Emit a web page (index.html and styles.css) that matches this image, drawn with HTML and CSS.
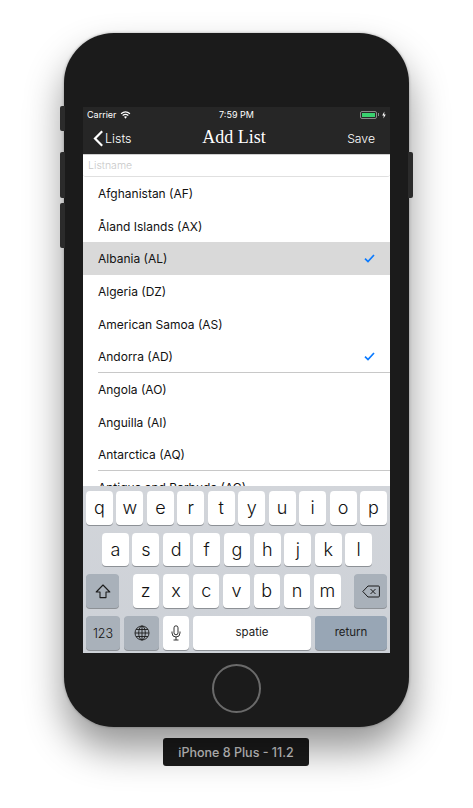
FILE: index.html
```html
<!DOCTYPE html>
<html lang="en">
<head>
<meta charset="utf-8">
<title>Add List</title>
<link rel="stylesheet" href="styles.css">
</head>
<body>
<div class="stage">
  <div class="phone">
    <span class="side side-mute"></span>
    <span class="side side-up"></span>
    <span class="side side-down"></span>
    <span class="side side-power"></span>
    <div class="screen">
      <div class="status">
        <div class="status-left">
          <span>Carrier</span>
          <svg class="wifi" viewBox="0 0 12 9" width="11" height="8"><path d="M1 3.2C4 .6 8 .6 11 3.2" fill="none" stroke="#fff" stroke-width="1.4"/><path d="M2.8 5C4.8 3.4 7.2 3.4 9.2 5" fill="none" stroke="#fff" stroke-width="1.4"/><path d="M4.3 6.6 6 8.6l1.7-2C6.6 5.8 5.4 5.8 4.3 6.6z" fill="#fff"/></svg>
        </div>
        <div class="status-time">7:59 PM</div>
        <div class="status-right">
          <span class="battery"><span class="battery-fill"></span></span>
          <span class="battery-tip"></span>
          <svg class="bolt" viewBox="0 0 5 9" width="4" height="8"><path d="M3 0 .3 5h1.9L1.8 9 4.7 3.8H2.7z" fill="#fff"/></svg>
        </div>
      </div>
      <div class="nav">
        <div class="nav-back">
          <svg class="chevron" viewBox="0 0 11 17" width="11" height="17"><path d="M9.2 1.3 2 8.5l7.2 7.2" fill="none" stroke="#fff" stroke-width="2.2"/></svg>
          <span>Lists</span>
        </div>
        <div class="nav-title">Add List</div>
        <div class="nav-save">Save</div>
      </div>
      <div class="content">
        <div class="field">Listname</div>
        <div class="row"><span>Afghanistan (AF)</span></div>
        <div class="row"><span>Åland Islands (AX)</span></div>
        <div class="row row-active"><span>Albania (AL)</span><svg class="check" viewBox="0 0 11 9" width="11" height="9"><path d="M1 4.6 4 7.6 10 1" fill="none" stroke="#0a7aff" stroke-width="1.7"/></svg></div>
        <div class="row"><span>Algeria (DZ)</span></div>
        <div class="row"><span>American Samoa (AS)</span></div>
        <div class="row row-line"><span>Andorra (AD)</span><svg class="check" viewBox="0 0 11 9" width="11" height="9"><path d="M1 4.6 4 7.6 10 1" fill="none" stroke="#0a7aff" stroke-width="1.7"/></svg></div>
        <div class="row"><span>Angola (AO)</span></div>
        <div class="row"><span>Anguilla (AI)</span></div>
        <div class="row row-line"><span>Antarctica (AQ)</span></div>
        <div class="row"><span>Antigua and Barbuda (AG)</span></div>
      </div>
      <div class="keyboard">
        <div class="kb-row">
          <div class="key">q</div><div class="key">w</div><div class="key">e</div><div class="key">r</div><div class="key">t</div><div class="key">y</div><div class="key">u</div><div class="key">i</div><div class="key">o</div><div class="key">p</div>
        </div>
        <div class="kb-row kb-row-mid">
          <div class="key">a</div><div class="key">s</div><div class="key">d</div><div class="key">f</div><div class="key">g</div><div class="key">h</div><div class="key">j</div><div class="key">k</div><div class="key">l</div>
        </div>
        <div class="kb-row kb-row-third">
          <div class="key key-dark key-action">
            <svg viewBox="0 0 16 15" width="16" height="15"><path d="M8 1 1.200 8H5v5.600h6V8h3.800z" fill="none" stroke="#1c1c1c" stroke-width="1.100" stroke-linejoin="round"/></svg>
          </div>
          <div class="letters">
            <div class="key">z</div><div class="key">x</div><div class="key">c</div><div class="key">v</div><div class="key">b</div><div class="key">n</div><div class="key">m</div>
          </div>
          <div class="key key-dark key-action">
            <svg viewBox="0 0 18 13" width="18" height="13"><path d="M6 1h10.400a1 1 0 0 1 1 1v9a1 1 0 0 1-1 1H6L.8 6.500z" fill="none" stroke="#1c1c1c" stroke-width="1"/><path d="m8.500 4 5 5m0-5-5 5" stroke="#1c1c1c" stroke-width="1" fill="none"/></svg>
          </div>
        </div>
        <div class="kb-row kb-row-bottom">
          <div class="key key-dark key-num">123</div>
          <div class="key key-dark key-globe">
            <svg viewBox="0 0 16 16" width="16" height="16"><g fill="none" stroke="#1c1c1c" stroke-width=".9"><circle cx="8" cy="8" r="7"/><ellipse cx="8" cy="8" rx="3.300" ry="7"/><path d="M8 1v14M1 8h14M2 4.500h12M2 11.500h12"/></g></svg>
          </div>
          <div class="key key-mic">
            <svg viewBox="0 0 10 16" width="10" height="16"><rect x="3" y=".8" width="4" height="9" rx="2" fill="none" stroke="#1c1c1c" stroke-width=".9"/><path d="M1 6.500v1.500a4 4 0 0 0 8 0V6.500M5 12v3M2.500 15h5" fill="none" stroke="#1c1c1c" stroke-width=".9"/></svg>
          </div>
          <div class="key key-space">spatie</div>
          <div class="key key-return">return</div>
        </div>
      </div>
    </div>
    <div class="home"></div>
  </div>
  <div class="device-label">iPhone 8 Plus - 11.2</div>
</div>
</body>
</html>
```

FILE: styles.css
```css
* { box-sizing: border-box; }
html, body { margin: 0; padding: 0; background: #fff; }
body { font-family: Inter, "Liberation Sans", sans-serif; width: 473px; height: 808px; overflow: hidden; }

.stage { display: flex; flex-direction: column; align-items: center; padding-top: 33px; }

.phone {
  position: relative;
  width: 345px;
  height: 694px;
  background: #1b1b1b;
  border-radius: 50px;
  padding: 74px 19px 0;
  box-shadow: 0 22px 38px rgba(0,0,0,.42), 0 0 3px rgba(0,0,0,.3);
}

.side { position: absolute; width: 5px; background: #2b2b2b; border-radius: 2px 0 0 2px; }
.side-mute { left: -4px; top: 73px; height: 25px; }
.side-up { left: -4px; top: 119px; height: 46px; }
.side-down { left: -4px; top: 170px; height: 45px; }
.side-power { right: -4px; top: 119px; height: 46px; border-radius: 0 2px 2px 0; }

.screen { width: 307px; height: 546px; background: #fff; display: flex; flex-direction: column; overflow: hidden; }

.status { height: 15px; background: #262626; color: #fff; font-size: 9px; display: flex; align-items: center; justify-content: space-between; padding: 0 4px 0 4px; flex: none; }
.status-left { display: flex; align-items: center; gap: 3px; width: 100px; }
.status-time { font-size: 9px; }
.status-right { display: flex; align-items: center; justify-content: flex-end; width: 100px; }
.battery { width: 17px; height: 8px; border: 1px solid #8a8a8a; border-radius: 2px; padding: 1px; display: block; }
.battery-fill { display: block; width: 100%; height: 100%; background: #3ad06f; }
.battery-tip { width: 1px; height: 3px; background: #8a8a8a; margin: 0 3px 0 1px; }

.nav { height: 33px; background: #262626; color: #fff; display: flex; align-items: center; justify-content: space-between; flex: none; padding: 0 15px 0 10px; border-bottom: 1px solid #cfcfcf; }
.nav-back { display: flex; align-items: center; gap: 1px; font-size: 12.500px; font-weight: 300; width: 80px; }
.nav-title { font-family: "Liberation Serif", serif; font-size: 18px; line-height: 20px; margin-top: -2px; }
.nav-save { font-size: 12.200px; font-weight: 300; width: 80px; text-align: right; }

.content { flex: 1 1 0; min-height: 0; overflow: hidden; }

.field { height: 22px; border-bottom: 1px solid #e0e0e0; border-radius: 0 0 3px 3px; color: #c8c8c8; font-size: 10.500px; font-weight: 300; padding: 4px 0 0 5px; line-height: 14px; }

.row { height: 32.700px; display: flex; align-items: center; justify-content: space-between; padding: 0 15px; font-size: 12px; color: #111; position: relative; }
.row-active { background: #d9d9d9; }
.row-line::after { content: ""; position: absolute; left: 15px; right: 0; bottom: 0; height: 1px; background: #c8c8c8; }

.keyboard { height: 167px; flex: none; background: linear-gradient(#d2d5da, #cdd1d7); padding: 5px 3px 3px; display: flex; flex-direction: column; gap: 8px; }
.kb-row { display: grid; grid-template-columns: repeat(10, 1fr); gap: 3.500px; height: 34px; }
.kb-row-mid { grid-template-columns: repeat(9, 1fr); padding: 0 15px 0 16px; height: 33px; }
.kb-row-third { display: flex; justify-content: space-between; }
.kb-row-bottom { display: grid; grid-template-columns: 34px 35px 26px 118px 72px; gap: 4px; }

.letters { display: grid; grid-template-columns: repeat(7, 1fr); gap: 4px; width: 208px; }

.key { background: #fff; border-radius: 4px; box-shadow: 0 1px 0 #8d9196; display: flex; align-items: center; justify-content: center; font-size: 18px; font-weight: 300; color: #111; padding-bottom: 1px; }
.key-dark { background: #a9b1ba; }
.key-action { width: 33px; padding: 0; }
.key-num { font-size: 12.500px; padding: 0; }
.key-globe, .key-mic { padding: 0; }
.key-space { font-size: 11.500px; font-weight: 400; color: #222; padding: 0 0 2px; }
.key-return { background: #98a6b5; font-size: 11.500px; font-weight: 400; color: #222; padding: 0 0 2px; }

.home { width: 49px; height: 49px; border: 2px solid #6a6a6a; border-radius: 50%; margin: 11px auto 0; }

.device-label { margin: 11px 1px 0 0; width: 146px; height: 28px; background: #1b1b1b; border-radius: 3px; color: #ccc; font-size: 12.500px; font-weight: 500; display: flex; align-items: center; justify-content: center; }
```
